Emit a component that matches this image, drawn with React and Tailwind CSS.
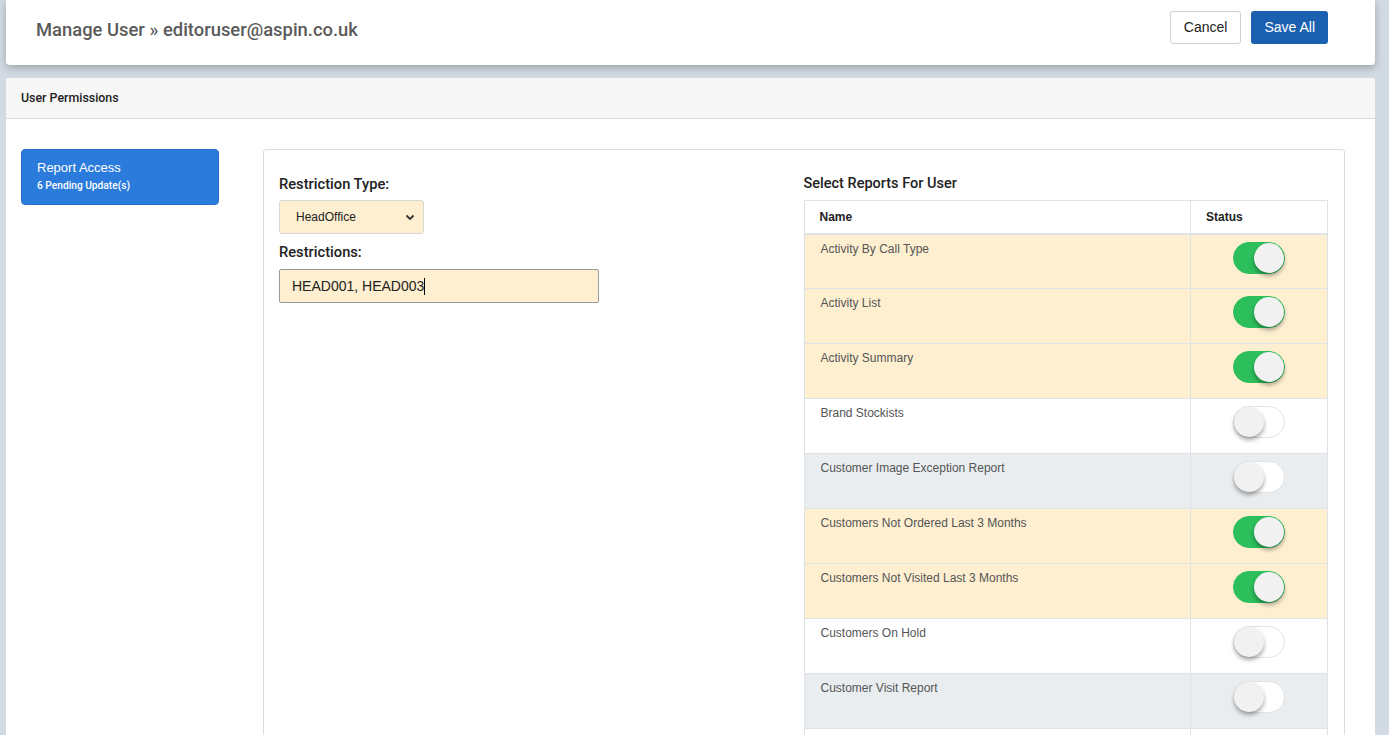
import React from "react";

const rows = [
  { name: "Activity By Call Type", on: true },
  { name: "Activity List", on: true },
  { name: "Activity Summary", on: true },
  { name: "Brand Stockists", on: false },
  { name: "Customer Image Exception Report", on: false },
  { name: "Customers Not Ordered Last 3 Months", on: true },
  { name: "Customers Not Visited Last 3 Months", on: true },
  { name: "Customers On Hold", on: false },
  { name: "Customer Visit Report", on: false },
  { name: "", on: false },
];

function Toggle({ on }) {
  return (
    <div
      className={
        "relative w-[52px] h-[32px] rounded-full border " +
        (on ? "bg-[#2cbf5b] border-[#2cbf5b]" : "bg-white border-[#e3e3e3]")
      }
    >
      <div
        className={
          "absolute top-[0px] w-[30px] h-[30px] rounded-full bg-[#f1f1f1] shadow-[0_3px_4px_rgba(0,0,0,0.35)] " +
          (on ? "right-[0px]" : "left-[0px]")
        }
      />
    </div>
  );
}

export default function App() {
  return (
    <div className="h-[735px] overflow-hidden bg-[#d2dae3] pl-[6px] pr-[14px] font-['Liberation_Sans',Arial,sans-serif]">
      <div className="h-[65px] bg-white rounded-b-[4px] shadow-[0_3px_8px_rgba(0,0,0,0.25)] flex items-start justify-between pl-[30px] pr-[47px] relative z-10">
        <h1 className="mt-[19px] text-[18.4px] leading-[22px] font-medium text-[#5a5a5a] font-['Roboto',Arial,sans-serif]">
          Manage User » editoruser@aspin.co.uk
        </h1>
        <div className="flex gap-[10px] mt-[11px]">
          <button className="h-[33px] px-[13px] rounded-[3px] border border-[#cfcfcf] bg-white text-[14px] text-[#222]">
            Cancel
          </button>
          <button className="h-[33px] px-[13px] rounded-[3px] bg-[#1b5fb1] text-[14px] text-white">
            Save All
          </button>
        </div>
      </div>

      <div className="mt-[13px] bg-white rounded-t-[3px] h-[700px]">
        <div className="h-[41px] bg-[#f7f7f7] border-b border-[#dcdcdc] flex items-center px-[15px] rounded-t-[3px]">
          <span className="text-[12.4px] font-medium text-[#222] font-['Roboto',Arial,sans-serif]">User Permissions</span>
        </div>
        <div className="flex pt-[30px] pl-[15px] pr-[30px]">
          <div className="w-[198px] shrink-0">
            <div className="h-[56px] rounded-[4px] bg-[#2b7bdc] border border-[#2670cc] px-[15px] pt-[10px] text-white">
              <div className="text-[13px] leading-[16px]">Report Access</div>
              <div className="text-[10.2px] font-medium leading-[14px] mt-[3px] font-['Roboto',Arial,sans-serif]">6 Pending Update(s)</div>
            </div>
          </div>
          <div className="ml-[44px] flex-1 border border-[#dcdcdc] rounded-[3px] h-[620px] pl-[15px] pr-[16px] pt-[25px]">
            <div className="grid grid-cols-2">
              <div>
                <label className="block text-[14.7px] font-medium text-[#222] leading-[18px] font-['Roboto',Arial,sans-serif]">
                  Restriction Type:
                </label>
                <div className="mt-[7px] w-[145px] h-[34px] rounded-[3px] border border-[#d8d8d8] bg-[#fdefd0] flex items-center justify-between pl-[16px] pr-[8px]">
                  <span className="text-[12px] text-[#222]">HeadOffice</span>
                  <svg width="10" height="10" viewBox="0 0 10 10">
                    <path d="M1.5 3.5 L5 7 L8.5 3.5" fill="none" stroke="#333" strokeWidth="1.8" />
                  </svg>
                </div>
                <label className="block mt-[9px] text-[14.7px] font-medium text-[#222] leading-[18px] font-['Roboto',Arial,sans-serif]">
                  Restrictions:
                </label>
                <div className="mt-[8px] w-[320px] h-[34px] rounded-[2px] border border-[#9a9a9a] bg-[#fdefd0] flex items-center pl-[12px]">
                  <span className="text-[14px] text-[#222]">HEAD001, HEAD003</span>
                  <span className="inline-block w-[1px] h-[17px] bg-black" />
                </div>
              </div>
              <div>
                <div className="text-[14.5px] font-medium text-[#222] leading-[18px] font-['Roboto',Arial,sans-serif]">
                  Select Reports For User
                </div>
                <table className="mt-[7px] w-full border-collapse text-[12px]">
                  <thead>
                    <tr className="h-[33px]">
                      <th className="text-left font-bold text-[#222] pl-[15px] border border-[#dfe3e7] border-b-2">
                        Name
                      </th>
                      <th className="w-[137px] text-left font-bold text-[#222] pl-[15px] border border-[#dfe3e7] border-b-2">
                        Status
                      </th>
                    </tr>
                  </thead>
                  <tbody>
                    {rows.map((r, i) => {
                      const bg = r.on
                        ? "bg-[#fdefd0]"
                        : i % 2 === 0
                        ? "bg-[#e9edf0]"
                        : "bg-white";
                      return (
                        <tr key={i} className={"h-[55px] " + bg}>
                          <td className="align-top pl-[16px] pt-[6px] text-[#555] border border-[#dfe3e7] leading-[17px]">
                            {r.name}
                          </td>
                          <td className="align-top pt-[7px] border border-[#dfe3e7]">
                            <div className="flex justify-center">
                              <Toggle on={r.on} />
                            </div>
                          </td>
                        </tr>
                      );
                    })}
                  </tbody>
                </table>
              </div>
            </div>
          </div>
        </div>
      </div>
    </div>
  );
}
